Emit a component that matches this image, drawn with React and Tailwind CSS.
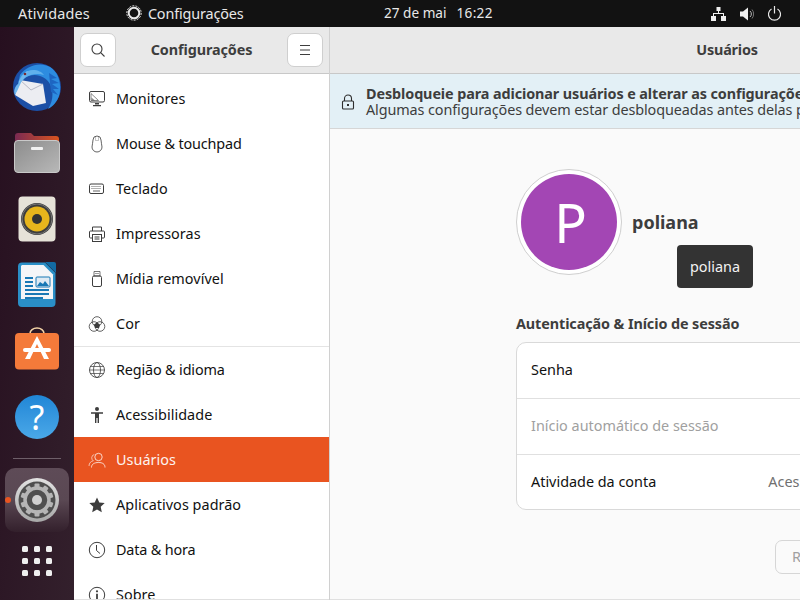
import React from "react";

const S = ({ children, size = 18, vb = "0 0 18 18", className = "" }) => (
  <svg width={size} height={size} viewBox={vb} fill="none" className={className}>{children}</svg>
);

const c = "#3d3d3d";
const icons = {
  monitor: (
    <S>
      <rect x="1.5" y="1.5" width="15" height="10.5" rx="1.5" stroke={c} />
      <path d="M3 3.5 L10.5 10.500 H3 Z" stroke={c} strokeOpacity=".6" />
      <path d="M3.500 7.500 L7 10.500 H3.500 Z" fill={c} opacity=".6" />
      <path d="M7 13h4v1.500H7zM5 15h8v1.300H5z" fill={c} />
    </S>
  ),
  mouse: (
    <S>
      <path d="M5 5a4 4 0 0 1 8 0c0 2.500 1 5 1 7a5 5 0 0 1-10 0c0-2 1-4.500 1-7Z" stroke={c} strokeOpacity=".8" />
      <path d="M7.500 1.500v4h3v-4" stroke={c} strokeOpacity=".3" />
    </S>
  ),
  keyboard: (
    <S>
      <rect x="1.5" y="4" width="14" height="9.500" rx="1.5" stroke={c} />
      <path d="M3.500 6.500h10M3.500 8.500h10" stroke={c} strokeDasharray="1 1" strokeOpacity=".8" />
      <path d="M5 11h7" stroke={c} strokeOpacity=".8" />
    </S>
  ),
  printer: (
    <S>
      <path d="M4.5 6V2h9v4" stroke={c} />
      <path d="M4 13H2.5a1 1 0 0 1-1-1V7a1 1 0 0 1 1-1h13a1 1 0 0 1 1 1v5a1 1 0 0 1-1 1H14" stroke={c} />
      <rect x="4.5" y="9.5" width="9" height="7" stroke={c} />
      <path d="M6.5 12h5M6.5 14h5" stroke={c} />
    </S>
  ),
  usb: (
    <S>
      <path d="M6 1.500h6V6H6z" stroke={c} strokeOpacity=".7" />
      <path d="M7.500 3.500h1M9.500 3.500h1" stroke={c} />
      <rect x="4.500" y="6" width="9" height="10.500" rx="1.500" stroke={c} />
    </S>
  ),
  color: (
    <S>
      <circle cx="9" cy="6.500" r="4.800" stroke={c} strokeOpacity=".8" />
      <circle cx="6" cy="11.500" r="4.800" stroke={c} strokeOpacity=".8" />
      <circle cx="12" cy="11.500" r="4.800" stroke={c} strokeOpacity=".8" />
      <path d="M9 7.500 12 9.500 11 13 7 13 6 9.500Z" fill={c} />
    </S>
  ),
  globe: (
    <S>
      <circle cx="9" cy="9" r="7.5" stroke={c} strokeOpacity=".85" />
      <ellipse cx="9" cy="9" rx="3.5" ry="7.5" stroke={c} strokeOpacity=".8" />
      <path d="M1.5 9h15M2.5 5.5h13M2.5 12.5h13" stroke={c} strokeOpacity=".7" />
    </S>
  ),
  access: (
    <S>
      <circle cx="9" cy="3" r="2" fill={c} />
      <path d="M3 6.2h12v1.6h-4V17H9.6v-5H8.4v5H7V7.8H3Z" fill={c} />
    </S>
  ),
  user: (
    <S>
      <circle cx="10.5" cy="6" r="3.7" stroke="#fff" strokeOpacity=".75" />
      <path d="M3.5 16.5c0-3.5 3-5 7-5s6.5 1.5 6.500 5" stroke="#fff" strokeOpacity=".75" />
      <path d="M6.3 3.500a3.500 3.500 0 0 0-1 6.300C3 10.200 1 12 1 15" stroke="#fff" strokeOpacity=".6" />
    </S>
  ),
  star: (
    <S>
      <path d="M9 1.5l2.3 5 5.4.6-4 3.7 1.100 5.400L9 13.500l-4.800 2.700 1.100-5.400-4-3.700 5.400-.6Z" fill={c} />
    </S>
  ),
  clock: (
    <S>
      <circle cx="9" cy="9" r="7.700" stroke={c} />
      <path d="M8.500 4v5.500l3.500 3" stroke={c} />
    </S>
  ),
  info: (
    <S>
      <circle cx="9" cy="9" r="7.700" stroke={c} />
      <circle cx="9" cy="5.300" r="1.100" fill={c} />
      <path d="M9 7.800v6" stroke={c} strokeWidth="1.800" />
    </S>
  ),
};

function Row({ icon, label, active, amp }) {
  return (
    <div className={`flex h-[45px] items-center pl-[14px] ${active ? "bg-[#e95420] text-[#fdf3ef]" : "text-[#111111]"}`}>
      <span className="flex w-[18px] justify-center">{icons[icon]}</span>
      <span className={`ml-[10px] whitespace-nowrap text-[14.4px] ${amp ? "tracking-[-0.15px]" : "tracking-[0.05px]"}`}>{label}</span>
    </div>
  );
}

const Slot = ({ children }) => <div className="flex h-[66px] items-center justify-center">{children}</div>;

const Thunderbird = () => (
  <svg width="48" height="48" viewBox="0 0 48 48">
    <circle cx="24" cy="24" r="24" fill="#1b4fa6" />
    <path d="M7 12C13 3 27-2 37 4c8 5 11 15 10 24-1 8-5 14-12 18 5-8 6-17 2-25C33 14 24 10 16 13 12 14 8 16 5 21Z" fill="#2d8ce0" />
    <path d="M36 10l8 5-6 1 8 4-7 1 7 5-6 0 5 6-7-3" fill="#1d65c2" />
    <path d="M5 21C7 12 13 7 20 7c5 0 9 2 11 5-6-2-14-1-19 3Z" fill="#5fb0ec" />
    <path d="M7 17 30 21 33 40 20 43 2 32Z" fill="#ecedf2" />
    <path d="M7 17 18 27 30 21" fill="none" stroke="#b6b8c6" />
    <path d="M6 20C8 14 11 9 15 8c-1 4-4 8-6 10-2 3-4 9-7 14C0 28 2 23 6 20Z" fill="#6fb8ee" />
    <circle cx="12" cy="11" r="1.300" fill="#7a2a30" />
  </svg>
);

const Files = () => (
  <svg width="46" height="42" viewBox="0 0 46 42">
    <defs>
      <linearGradient id="tab" x1="0" x2="1"><stop offset="0" stopColor="#7a2a52" /><stop offset="1" stopColor="#d9541f" /></linearGradient>
      <linearGradient id="fold" x1="0" y1="0" x2="1" y2="1"><stop offset="0" stopColor="#8c8c8c" /><stop offset="1" stopColor="#b8b8b8" /></linearGradient>
    </defs>
    <path d="M1 4a3 3 0 0 1 3-3h13l3 3h22a3 3 0 0 1 3 3v12H1Z" fill="url(#tab)" />
    <rect x="0.500" y="8.500" width="45" height="32" rx="3.500" fill="url(#fold)" stroke="#c9c9c9" />
    <rect x="17" y="15" width="12" height="3" rx="1" fill="#f2f2f2" />
  </svg>
);

const Rhythmbox = () => (
  <svg width="38" height="46" viewBox="0 0 38 46">
    <rect width="37" height="45" x=".5" y=".5" rx="4" fill="#e6e2d8" />
    <circle cx="19" cy="23" r="16" fill="#3d3d3d" />
    <circle cx="19" cy="23" r="15" fill="none" stroke="#777" />
    <circle cx="19" cy="23" r="12.500" fill="#e7b51c" />
    <circle cx="19" cy="23" r="5" fill="#333" />
  </svg>
);

const Writer = () => (
  <svg width="38" height="46" viewBox="0 0 38 46">
    <path d="M4 .5h23L37.500 11v30a4 4 0 0 1-4 4H4a4 4 0 0 1-4-4V4.500a4 4 0 0 1 4-4Z" fill="#2a8fc7" />
    <path d="M4 3h21.500L35 12.500V37H3V4Z" fill="#f4f5f7" />
    <path d="M27 0h9a2 2 0 0 1 2 2v9Z" fill="#126ba3" />
    <path d="M7 15h8v2H7zM7 19h8v2H7zM7 23h8v2H7zM7 27h24v2H7zM7 31h24v2H7zM7 35h18v2H7z" fill="#1878b5" />
    <rect x="18" y="15" width="14" height="10" rx="1" fill="#dfeaf3" stroke="#1878b5" />
    <path d="M19 24l3-4 3 2 2-3 4 5Z" fill="#1878b5" />
  </svg>
);

const Store = () => (
  <svg width="44" height="43" viewBox="0 0 44 43" className="mt-[-6px]">
    <path d="M15 8V6.500a7 5.500 0 0 1 14 0V8" fill="none" stroke="#f3d3a6" strokeWidth="1.600" />
    <rect y="6" width="44" height="36.500" rx="4" fill="#f47a3a" />
    <path d="M22 9 34 32H29L22 17 15 32H10Z" fill="#fff" />
    <rect x="8" y="21" width="28" height="4" rx="2" fill="#fff" />
  </svg>
);

const Help = () => (
  <div className="relative flex h-[44px] w-[44px] items-center justify-center overflow-hidden rounded-full bg-gradient-to-b from-[#1f86d6] to-[#4aa8e8]">
    <span className="text-[34px] leading-none text-white">?</span>
  </div>
);

const Settings = () => {
  const teeth = Array.from({ length: 10 }, (_, i) => i * 36);
  return (
    <svg width="46" height="46" viewBox="0 0 46 46">
      <defs>
        <linearGradient id="ring" x1="0" y1="0" x2="0" y2="1"><stop offset="0" stopColor="#e2e2e2" /><stop offset="1" stopColor="#a8a8a8" /></linearGradient>
      </defs>
      <circle cx="23" cy="23" r="22" fill="url(#ring)" />
      <circle cx="23" cy="23" r="18.500" fill="#4f4f4f" />
      {teeth.map((a) => (
        <rect key={a} x="20.500" y="6.500" width="5" height="6" rx="1" fill="#b5b5b5" transform={`rotate(${a} 23 23)`} />
      ))}
      <circle cx="23" cy="23" r="12" fill="none" stroke="#b5b5b5" strokeWidth="3.500" />
      <path d="M18 15l14 8-14 8Z" fill="#4f4f4f" />
      <circle cx="23" cy="23" r="5" fill="#cfcfcf" />
    </svg>
  );
};

export default function App() {
  const dots = Array.from({ length: 9 });
  return (
    <div className="flex h-[600px] w-[800px] flex-col overflow-hidden bg-[#2c1a26] font-['Noto_Sans',sans-serif]">
      <header className="relative flex h-[27px] shrink-0 items-center bg-[#121212] text-[14.4px] text-[#e8e8e8]">
        <span className="ml-[18px] tracking-[0.2px]">Atividades</span>
        <span className="ml-[36px] flex items-center gap-[6px] tracking-[-0.15px]">
          <svg width="16" height="16" viewBox="0 0 16 16" fill="none">
            <circle cx="8" cy="8" r="5.300" stroke="#e8e8e8" strokeWidth="2" />
            <circle cx="8" cy="8" r="7.200" stroke="#e8e8e8" strokeDasharray="2 1.200" />
          </svg>
          Configurações
        </span>
        <span className="absolute left-[384px] flex text-[13.6px]">
          <span>27 de mai</span>
          <span className="ml-[10px] tracking-[0.3px]">16:22</span>
        </span>
        <div className="ml-auto mr-[19px] flex items-center gap-[14px]">
          <svg width="15" height="14" viewBox="0 0 15 14" fill="#efefef">
            <path d="M5.500 0h4v4h-4zM0 9h5v5H0zM10 9h5v5h-5z" />
            <path d="M7 4h1v2h5v3h-1V7H3v2H2V6h5z" />
          </svg>
          <svg width="14" height="14" viewBox="0 0 14 14" fill="none">
            <path d="M0 4.500h3L8 .5v13l-5-4H0Z" fill="#efefef" />
            <path d="M10 4a4 4 0 0 1 0 6" stroke="#bbb" />
            <path d="M12 2.500a7 7 0 0 1 0 9" stroke="#777" />
          </svg>
          <svg width="13" height="15" viewBox="0 0 13 15" fill="none" stroke="#e8e8e8" strokeWidth="1.200">
            <path d="M3.500 3a6 6 0 1 0 6 0" />
            <path d="M6.500 0v7.500" />
          </svg>
        </div>
      </header>

      <div className="flex min-h-0 flex-1">
        <nav className="relative flex w-[74px] shrink-0 flex-col items-stretch bg-gradient-to-br from-[#260f1f] to-[#33202c] pt-[27px]">
          <Slot><Thunderbird /></Slot>
          <Slot><Files /></Slot>
          <Slot><Rhythmbox /></Slot>
          <Slot><Writer /></Slot>
          <Slot><Store /></Slot>
          <Slot><Help /></Slot>
          <div className="mx-[13px] mt-[8px] h-px bg-[#6e5f69]" />
          <div className="relative mx-[5px] mt-[9px] flex h-[64px] items-center justify-center rounded-[10px] bg-gradient-to-b from-[#5e4b57] via-[#5a4853] via-50% to-[#33202c]">
            <Settings />
          </div>
          <span className="absolute left-[5px] top-[470px] h-[6px] w-[6px] rounded-full bg-[#e95420]" />
          <div className="mt-[14px] grid grid-cols-3 justify-items-center gap-y-[6px] px-[19px]">
            {dots.map((_, i) => (
              <span key={i} className="h-[6px] w-[6px] rounded-[1.500px] bg-[#efefef]" />
            ))}
          </div>
        </nav>

        <div className="flex w-[256px] shrink-0 flex-col border-r border-[#d0d0d0] bg-white">
          <div className="flex h-[47px] shrink-0 items-center justify-between border-b border-[#c8c8c8] bg-[#e9e9e9] px-[6px]">
            <button className="flex h-[34px] w-[36px] items-center justify-center rounded-[7px] border border-[#cfcfcf] bg-white">
              <svg width="16" height="16" viewBox="0 0 16 16" fill="none" stroke="#3d3d3d" strokeWidth="1.100">
                <circle cx="7" cy="7" r="5" />
                <path d="M10.700 10.700l3.800 3.800" />
              </svg>
            </button>
            <span className="text-[14.4px] font-bold tracking-[-0.1px] text-[#3d3d3d]">Configurações</span>
            <button className="flex h-[34px] w-[36px] items-center justify-center rounded-[7px] border border-[#cfcfcf] bg-white">
              <svg width="12" height="10" viewBox="0 0 12 10" stroke="#3d3d3d">
                <path d="M1 .5h10M1 5h10M1 9.500h10" />
              </svg>
            </button>
          </div>
          <div className="min-h-0 flex-1 overflow-hidden border-b border-[#e0e0e0] pt-[2px]">
            <Row icon="monitor" label="Monitores" />
            <Row icon="mouse" label="Mouse & touchpad" amp />
            <Row icon="keyboard" label="Teclado" />
            <Row icon="printer" label="Impressoras" />
            <Row icon="usb" label="Mídia removível" />
            <Row icon="color" label="Cor" />
            <div className="h-px bg-[#e4e4e4]" />
            <Row icon="globe" label="Região & idioma" amp />
            <Row icon="access" label="Acessibilidade" />
            <Row icon="user" label="Usuários" active />
            <Row icon="star" label="Aplicativos padrão" />
            <Row icon="clock" label="Data & hora" amp />
            <Row icon="info" label="Sobre" />
          </div>
        </div>

        <main className="flex w-[794px] shrink-0 flex-col border-b border-[#e0e0e0] bg-[#fafafa]">
          <div className="flex h-[47px] shrink-0 items-center justify-center border-b border-[#c8c8c8] bg-[#e9e9e9] text-[14.4px] font-bold tracking-[-0.2px] text-[#3d3d3d]">
            Usuários
          </div>
          <div className="flex h-[55px] shrink-0 items-center border-b border-[#d6d6d6] bg-[#e3f0f6] pl-[11px] text-[14.4px] leading-[16px] tracking-[-0.1px] text-[#3d3d3d]">
            <svg width="14" height="16" viewBox="0 0 14 16" fill="none" stroke="#2e2e2e" strokeWidth="1.100" className="mt-[2px]">
              <rect x="1.500" y="7" width="11" height="8" rx="1" />
              <path d="M3.500 7V4.500a3.500 3.500 0 0 1 7 0V7" />
              <rect x="6" y="10" width="2" height="2" fill="#2e2e2e" stroke="none" />
            </svg>
            <div className="ml-[11px] mt-[1px] whitespace-nowrap">
              <div className="font-bold">Desbloqueie para adicionar usuários e alterar as configurações</div>
              <div>Algumas configurações devem estar desbloqueadas antes delas poderem ser alteradas.</div>
            </div>
          </div>
          <div className="relative mx-auto w-[422px] min-h-0 flex-1 pt-[40px]">
            <div className="flex items-center">
              <div className="flex h-[106px] w-[106px] items-center justify-center rounded-full border border-[#cfcfcf] bg-white">
                <div className="flex h-[96px] w-[96px] items-center justify-center rounded-full bg-[#a346b4] pl-[3px] text-[54px] leading-none text-white">
                  P
                </div>
              </div>
              <span className="ml-[10px] text-[18px] font-bold text-[#3d3d3d]">poliana</span>
            </div>
            <div className="absolute left-[161px] top-[116px] flex h-[43px] w-[76px] items-center justify-center rounded-[4px] bg-[#333333] text-[14.4px] text-[#f2f2f2]">
              poliana
            </div>
            <h2 className="mt-[39px] text-[14.4px] font-bold leading-[20px] tracking-[-0.1px] text-[#3d3d3d]">Autenticação & Início de sessão</h2>
            <div className="mt-[8px] overflow-hidden rounded-[10px] border border-[#d9d9d9] bg-white text-[14.4px]">
              <div className="flex h-[55px] items-center px-[14px] pb-[2px] text-[#111111]">Senha</div>
              <div className="flex h-[56px] items-center border-t border-[#e0e0e0] px-[14px] pb-[2px] text-[#a0a0a0]">Início automático de sessão</div>
              <div className="flex h-[55px] items-center border-t border-[#e0e0e0] px-[14px] pb-[1px] text-[#111111]">
                Atividade da conta
                <span className="ml-auto pr-[56px] text-[#707070]">Acessou agora</span>
              </div>
            </div>
            <div className="mt-[30px] flex justify-end">
              <button className="h-[34px] w-[163px] rounded-[7px] border border-[#d6d6d6] bg-[#fafafa] pl-[16px] text-left text-[14.4px] text-[#a0a0a0]">
                Remover usuário...
              </button>
            </div>
          </div>
        </main>
      </div>
    </div>
  );
}
